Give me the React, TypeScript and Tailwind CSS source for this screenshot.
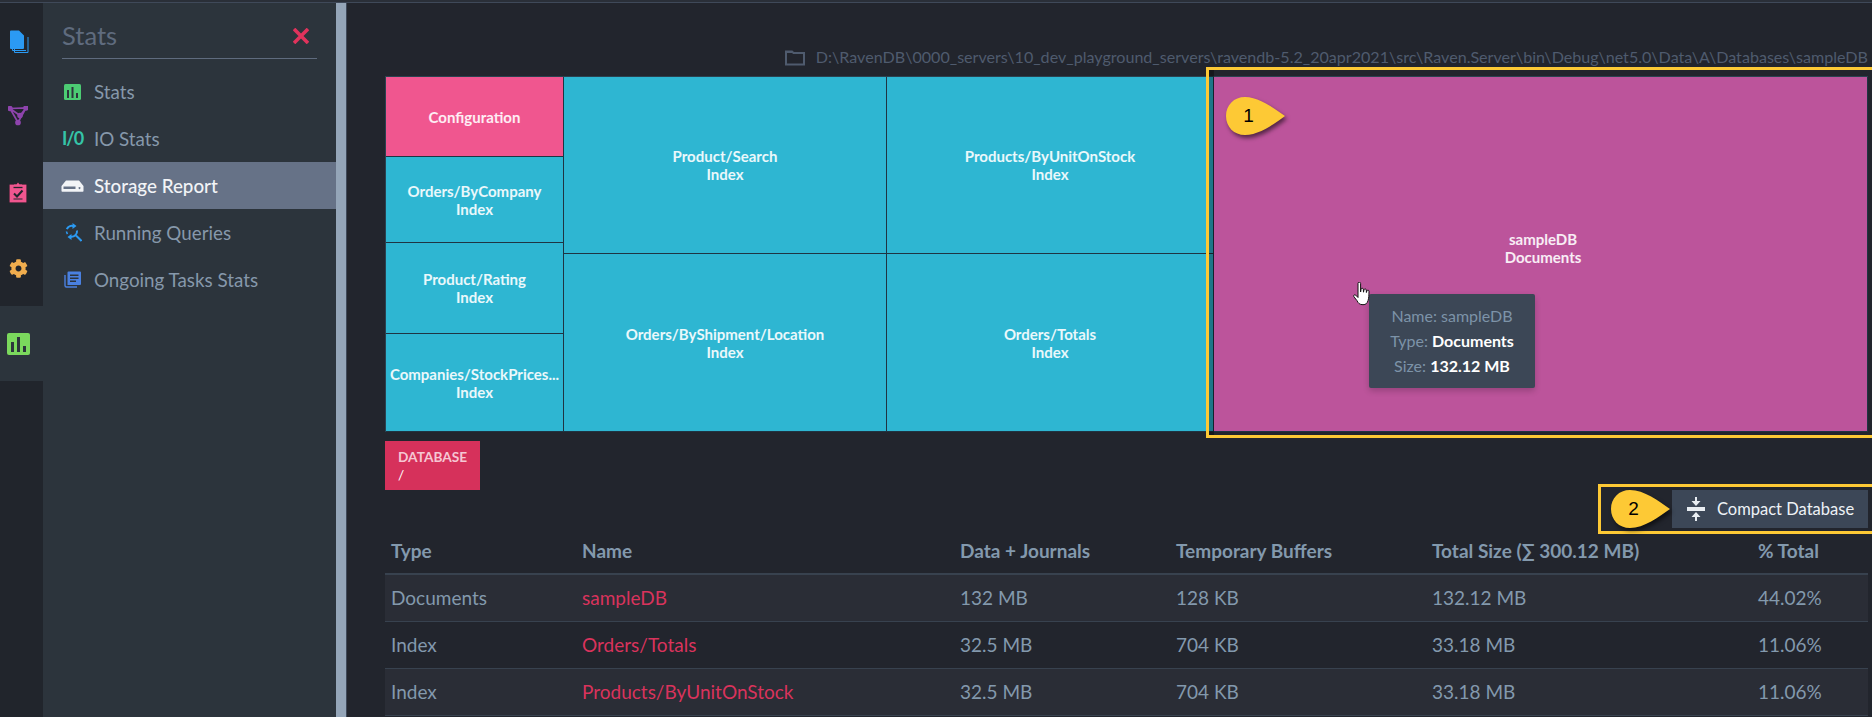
import React from "react";
import { FaCog } from "react-icons/fa";

const Docs = () => (
  <svg width="20" height="24" viewBox="0 0 20 24" fill="none">
    <path d="M5.500 7v15.500H19V7" stroke="#2b9af3" strokeWidth="1" />
    <path d="M3.500 7v13.500H17" stroke="#2b9af3" strokeWidth="1" />
    <path d="M1 1.500a1 1 0 0 1 1-1h8l5 5V18a1 1 0 0 1-1 1H2a1 1 0 0 1-1-1z" fill="#2b9af3" />
  </svg>
);
const Vitals = () => (
  <svg width="20" height="20" viewBox="0 0 20 20" fill="none" stroke="#8e44ad" strokeWidth="1.700">
    <path d="M2 2.500 18 2 10 16.500zM18 2l-6 7.500L2 2.500" />
    <circle cx="2" cy="2.500" r="1.900" fill="#8e44ad" />
    <circle cx="18" cy="2" r="1.900" fill="#8e44ad" />
    <circle cx="10" cy="16.500" r="2" fill="#8e44ad" />
    <circle cx="12" cy="9.500" r="1.900" fill="#8e44ad" />
  </svg>
);
const Clipboard = () => (
  <svg width="18" height="21" viewBox="0 0 18 21" fill="none">
    <rect x="0.500" y="2.500" width="17" height="18" rx="1" fill="#f0568f" stroke="#7a3350" />
    <path d="M5 2.500h2.500L9 .5l1.500 2H13v2.200H5z" fill="#f0568f" />
    <path d="M4.500 5.500h9" stroke="#22252d" strokeWidth="1.300" />
    <path d="M5 11.500 8 14.500 13.500 8.500" stroke="#22252d" strokeWidth="2" />
    <path d="M4.500 17h9" stroke="#22252d" strokeWidth="1" />
  </svg>
);
const BigBars = () => (
  <svg width="23" height="22" viewBox="0 0 23 22">
    <rect width="23" height="22" rx="2" fill="#7bd85d" />
    <rect x="4" y="9" width="3" height="10" fill="#2c343c" />
    <rect x="10" y="4" width="3" height="15" fill="#2c343c" />
    <rect x="16" y="13" width="3" height="6" fill="#2c343c" />
  </svg>
);
const SmallBars = () => (
  <svg width="17" height="16" viewBox="0 0 17 16">
    <rect width="17" height="16" rx="1.500" fill="#4ccb73" />
    <rect x="3" y="6" width="2" height="8" fill="#2c343c" />
    <rect x="7.500" y="3" width="2" height="11" fill="#2c343c" />
    <rect x="12" y="9" width="2" height="5" fill="#2c343c" />
  </svg>
);
const Hdd = () => (
  <svg width="23" height="12" viewBox="0 0 23 12">
    <path fillRule="evenodd" fill="#f2f4f7" d="M5 0.500h13l4.500 5.500V11a.8.8 0 0 1-.8.8H1.300A.8.8 0 0 1 .5 11V6zM2.500 6.500V9h12V6.500zM18.500 7a1 1 0 1 0 .01 0z" />
  </svg>
);
const RunQ = () => (
  <svg width="18" height="19" viewBox="0 0 18 19" fill="none" stroke="#2b9af3" strokeWidth="2">
    <path d="M2.800 6.200A5.500 5.500 0 0 1 9.500 3.100" />
    <path d="M13 7.500A5.500 5.500 0 0 1 6.500 13.700" />
    <path d="M2.500 8.500A5.500 5.500 0 0 0 3.500 11" strokeWidth="1.600" />
    <path d="M12 12.500l5.500 5.500" />
    <path d="M8.500 0 12.500 3 8.500 6zM7.500 11 3.500 14 7.500 17z" fill="#2b9af3" stroke="none" />
  </svg>
);
const Tasks = () => (
  <svg width="17" height="17" viewBox="0 0 17 17">
    <path fill="none" stroke="#4a80e0" strokeWidth="1.400" d="M1 4v10.500a1.500 1.500 0 0 0 1.500 1.500H13" />
    <path fillRule="evenodd" fill="#4a80e0" d="M3.500 1.500a1 1 0 0 1 1-1H16a1 1 0 0 1 1 1V13a1 1 0 0 1-1 1H3.500zM6 3.500v1.500h8.500V3.500zM6 6.500V8h8.500V6.500zM6 9.500V11h6V9.500z" />
  </svg>
);
const Folder = () => (
  <svg width="20" height="17" viewBox="0 0 20 17" fill="none">
    <path d="M1 15.500V2.500h6l1.500 1.500H19v11.500z" stroke="#4f5b6e" strokeWidth="2" />
    <path d="M1 2h6l1.500 2H1z" fill="#4f5b6e" />
  </svg>
);
const Compact = () => (
  <svg width="18" height="24" viewBox="0 0 18 24" fill="#e8edf2">
    <rect y="10" width="18" height="4" />
    <path d="M8 0h2v4h3.500L9 9 4.500 4H8zM8 24v-4H4.500L9 15l4.500 5H10v4z" />
  </svg>
);
const Hand = () => (
  <svg width="18" height="25" viewBox="0 0 18 25">
    <path fill="#fff" stroke="#111" strokeWidth="1" strokeLinejoin="round" d="M5 1.500a1.300 1.300 0 0 1 2.600 0V10l.4-3a1.200 1.200 0 0 1 2.300.2l.2 3 .5-2.500a1.200 1.200 0 0 1 2.300.3l.1 2.500.5-1.700a1.100 1.100 0 0 1 2.100.4c0 4-.2 7-1 9.500-.8 2.500-2 4-5 4-3.500 0-4.700-1.500-6-4L.8 14.500c-.6-1.300 1-2.400 2-1.300L5 15.500z" />
  </svg>
);
const Callout = ({ n, className }: { n: string; className: string }) => (
  <div className={`absolute h-[38px] w-[60px] ${className}`}>
    <svg width="60" height="38" viewBox="0 0 60 38" className="absolute inset-0 drop-shadow-[2px_3px_2px_rgba(0,0,0,0.55)]">
      <path fill="#fdc935" d="M19 0C33 0 48 11 59 19 48 27 33 38 19 38 8 38 0 30 0 19S8 0 19 0z" />
    </svg>
    <span className="absolute left-0 top-0 flex h-[38px] w-[45px] items-center justify-center text-[19px] text-black font-['Liberation_Sans',sans-serif]">{n}</span>
  </div>
);

const Node = ({ a, b, className, tx = "" }: { a: string; b?: string; className: string; tx?: string }) => (
  <div className={`flex flex-col items-center justify-center overflow-hidden border-b border-r border-[#1f3442] text-center text-[15px] font-bold leading-[18px] text-white/90 ${className} ${tx}`}>
    <div className="w-full truncate px-[2px]">{a}</div>
    {b && <div>{b}</div>}
  </div>
);

const menu = [
  { label: "Stats", icon: <SmallBars /> },
  { label: "IO Stats", icon: <span className="text-[18px] font-bold tracking-[-1px] text-[#35c4a8]">I/0</span> },
  { label: "Storage Report", icon: <Hdd />, active: true },
  { label: "Running Queries", icon: <RunQ /> },
  { label: "Ongoing Tasks Stats", icon: <Tasks /> },
];

const rows = [
  ["Documents", "sampleDB", "132 MB", "128 KB", "132.12 MB", "44.02%"],
  ["Index", "Orders/Totals", "32.5 MB", "704 KB", "33.18 MB", "11.06%"],
  ["Index", "Products/ByUnitOnStock", "32.5 MB", "704 KB", "33.18 MB", "11.06%"],
];

export default function App() {
  return (
    <div className="relative flex h-[717px] w-[1872px] flex-col overflow-hidden bg-[#22252d] font-['Lato','Noto_Sans',sans-serif]">
      <div className="h-[3px] shrink-0 border-b border-[#3f4959] bg-[#2a2f38]" />
      <div className="flex min-h-0 flex-1">
        <nav className="flex w-[43px] shrink-0 flex-col items-center bg-[#21252c]">
          <div className="flex h-[75px] w-full items-center justify-center pr-[5px] pt-[2px]"><Docs /></div>
          <div className="flex h-[76px] w-full items-center justify-center pr-[7px]"><Vitals /></div>
          <div className="flex h-[76px] w-full items-center justify-center pr-[7px]"><Clipboard /></div>
          <div className="flex h-[76px] w-full items-center justify-center pr-[7px]"><FaCog className="text-[19px] text-[#f0ad4e]" /></div>
          <div className="flex h-[75px] w-full items-center justify-center bg-[#2c343c] pr-[6px]"><BigBars /></div>
        </nav>
        <aside className="w-[293px] shrink-0 bg-[#2c343c]">
          <div className="ml-[19px] mr-[19px] flex h-[56px] items-center justify-between border-b border-[#5f6b7e] pt-[10px]">
            <span className="text-[25.500px] text-[#5f6b7e]">Stats</span>
            <svg width="16" height="16" viewBox="0 0 16 16" className="mr-[8px] mt-px"><path d="M1 1l14 14M15 1 1 15" stroke="#e0335c" strokeWidth="3.600" /></svg>
          </div>
          <div className="mt-[9px]">
            {menu.map((m) => (
              <div key={m.label} className={`flex h-[47px] items-center text-[18.800px] ${m.active ? "bg-[#667287] font-medium text-[#f2f4f7]" : "text-[#8698ab]"}`}>
                <div className="flex w-[51px] shrink-0 justify-center pl-[8px]">{m.icon}</div>
                <span className="pt-px">{m.label}</span>
              </div>
            ))}
          </div>
        </aside>
        <div className="w-[10px] shrink-0 bg-[#94a5b8]" />
        <div className="w-px shrink-0 bg-[#3f4959]" />
        <main className="flex min-w-0 flex-1 flex-col pl-[38px] pr-[4px]">
          <div className="flex h-[73px] items-center justify-end gap-[11px] pt-[35px] text-[16.100px] leading-none text-[#4f5b6e]">
            <Folder />
            <span>D:\RavenDB\0000_servers\10_dev_playground_servers\ravendb-5.2_20apr2021\src\Raven.Server\bin\Debug\net5.0\Data\A\Databases\sampleDB</span>
          </div>
          <div className="flex h-[356px] border-l border-t border-[#2b4250]">
            <div className="flex w-[178px] flex-col">
              <Node a="Configuration" className="h-[80px] bg-[#f0568f]" />
              <Node a="Orders/ByCompany" b="Index" className="h-[86px] bg-[#2eb6d2]" />
              <Node a="Product/Rating" b="Index" className="h-[91px] bg-[#2eb6d2]" />
              <Node a="Companies/StockPrices..." b="Index" className="h-[98px] bg-[#2eb6d2]" />
            </div>
            <div className="flex w-[323px] flex-col">
              <Node a="Product/Search" b="Index" className="h-[177px] bg-[#2eb6d2]" />
              <Node a="Orders/ByShipment/Location" b="Index" className="h-[178px] bg-[#2eb6d2]" />
            </div>
            <div className="flex w-[327px] flex-col">
              <Node a="Products/ByUnitOnStock" b="Index" className="h-[177px] bg-[#2eb6d2]" />
              <Node a="Orders/Totals" b="Index" className="h-[178px] bg-[#2eb6d2]" />
            </div>
            <Node a="sampleDB" b="Documents" className="h-[355px] flex-1 bg-[#bc549b]" tx="pb-[12px] pl-[5px]" />
          </div>
          <div className="mt-[9px] h-[49px] w-[95px] bg-[#d6315b] px-[13px] pt-[7px] text-[13.700px] leading-[18px]">
            <div className="font-bold text-[#f5c6d3]">DATABASE</div>
            <div className="text-white">/</div>
          </div>
          <div className="flex justify-end">
            <button className="flex h-[38px] w-[196px] items-center gap-[13px] bg-[#3c4757] pl-[15px] text-[16.500px] text-[#eef2f6]">
              <Compact />
              <span className="-ml-px">Compact Database</span>
            </button>
          </div>
          <table className="w-full table-fixed border-collapse text-left text-[19px] text-[#8399ad]">
            <thead>
              <tr className="h-[46px] border-b-2 border-[#38424f]">
                <th className="w-[191px] pl-[6px] pt-[2px] font-bold">Type</th>
                <th className="w-[378px] pl-[6px] pt-[2px] font-bold">Name</th>
                <th className="w-[216px] pl-[6px] pt-[2px] font-bold">Data + Journals</th>
                <th className="w-[256px] pl-[6px] pt-[2px] font-bold">Temporary Buffers</th>
                <th className="w-[326px] pl-[6px] pt-[2px] font-bold">Total Size (∑ 300.12 MB)</th>
                <th className="pl-[6px] pt-[2px] font-bold">% Total</th>
              </tr>
            </thead>
            <tbody>
              {rows.map((r, i) => (
                <tr key={i} className={`h-[47px] border-b border-[#38424f] ${i % 2 === 0 ? "bg-[#2a2d36]" : ""}`}>
                  {r.map((c, j) => (
                    <td key={j} className={`pl-[6px] pt-px ${j === 1 ? "text-[#d9335c]" : ""}`}>{c}</td>
                  ))}
                </tr>
              ))}
            </tbody>
          </table>
        </main>
      </div>

      {/* annotation frames and tooltip, lying over the content */}
      <div className="pointer-events-none absolute left-[1206px] top-[67px] h-[371px] w-[680px] border-[3px] border-[#fdc935] shadow-[inset_5px_0_0_rgba(0,0,0,0.35)]" />
      <div className="pointer-events-none absolute left-[1598px] top-[484px] h-[50px] w-[290px] border-[3px] border-[#fdc935]" />
      <Callout n="1" className="left-[1226px] top-[97px]" />
      <Callout n="2" className="left-[1611px] top-[490px]" />
      <div className="absolute left-[1369px] top-[294px] flex h-[94px] w-[166px] flex-col items-center justify-center rounded-[2px] bg-[#3c4756] pb-[2px] text-[16px] leading-[25px] text-[#7d93a8] shadow-[0_3px_6px_rgba(0,0,0,0.2)]">
        <div>Name: sampleDB</div>
        <div>Type: <b className="text-white">Documents</b></div>
        <div>Size: <b className="text-white">132.12 MB</b></div>
      </div>
      <div className="absolute left-[1353px] top-[282px]"><Hand /></div>
    </div>
  );
}
